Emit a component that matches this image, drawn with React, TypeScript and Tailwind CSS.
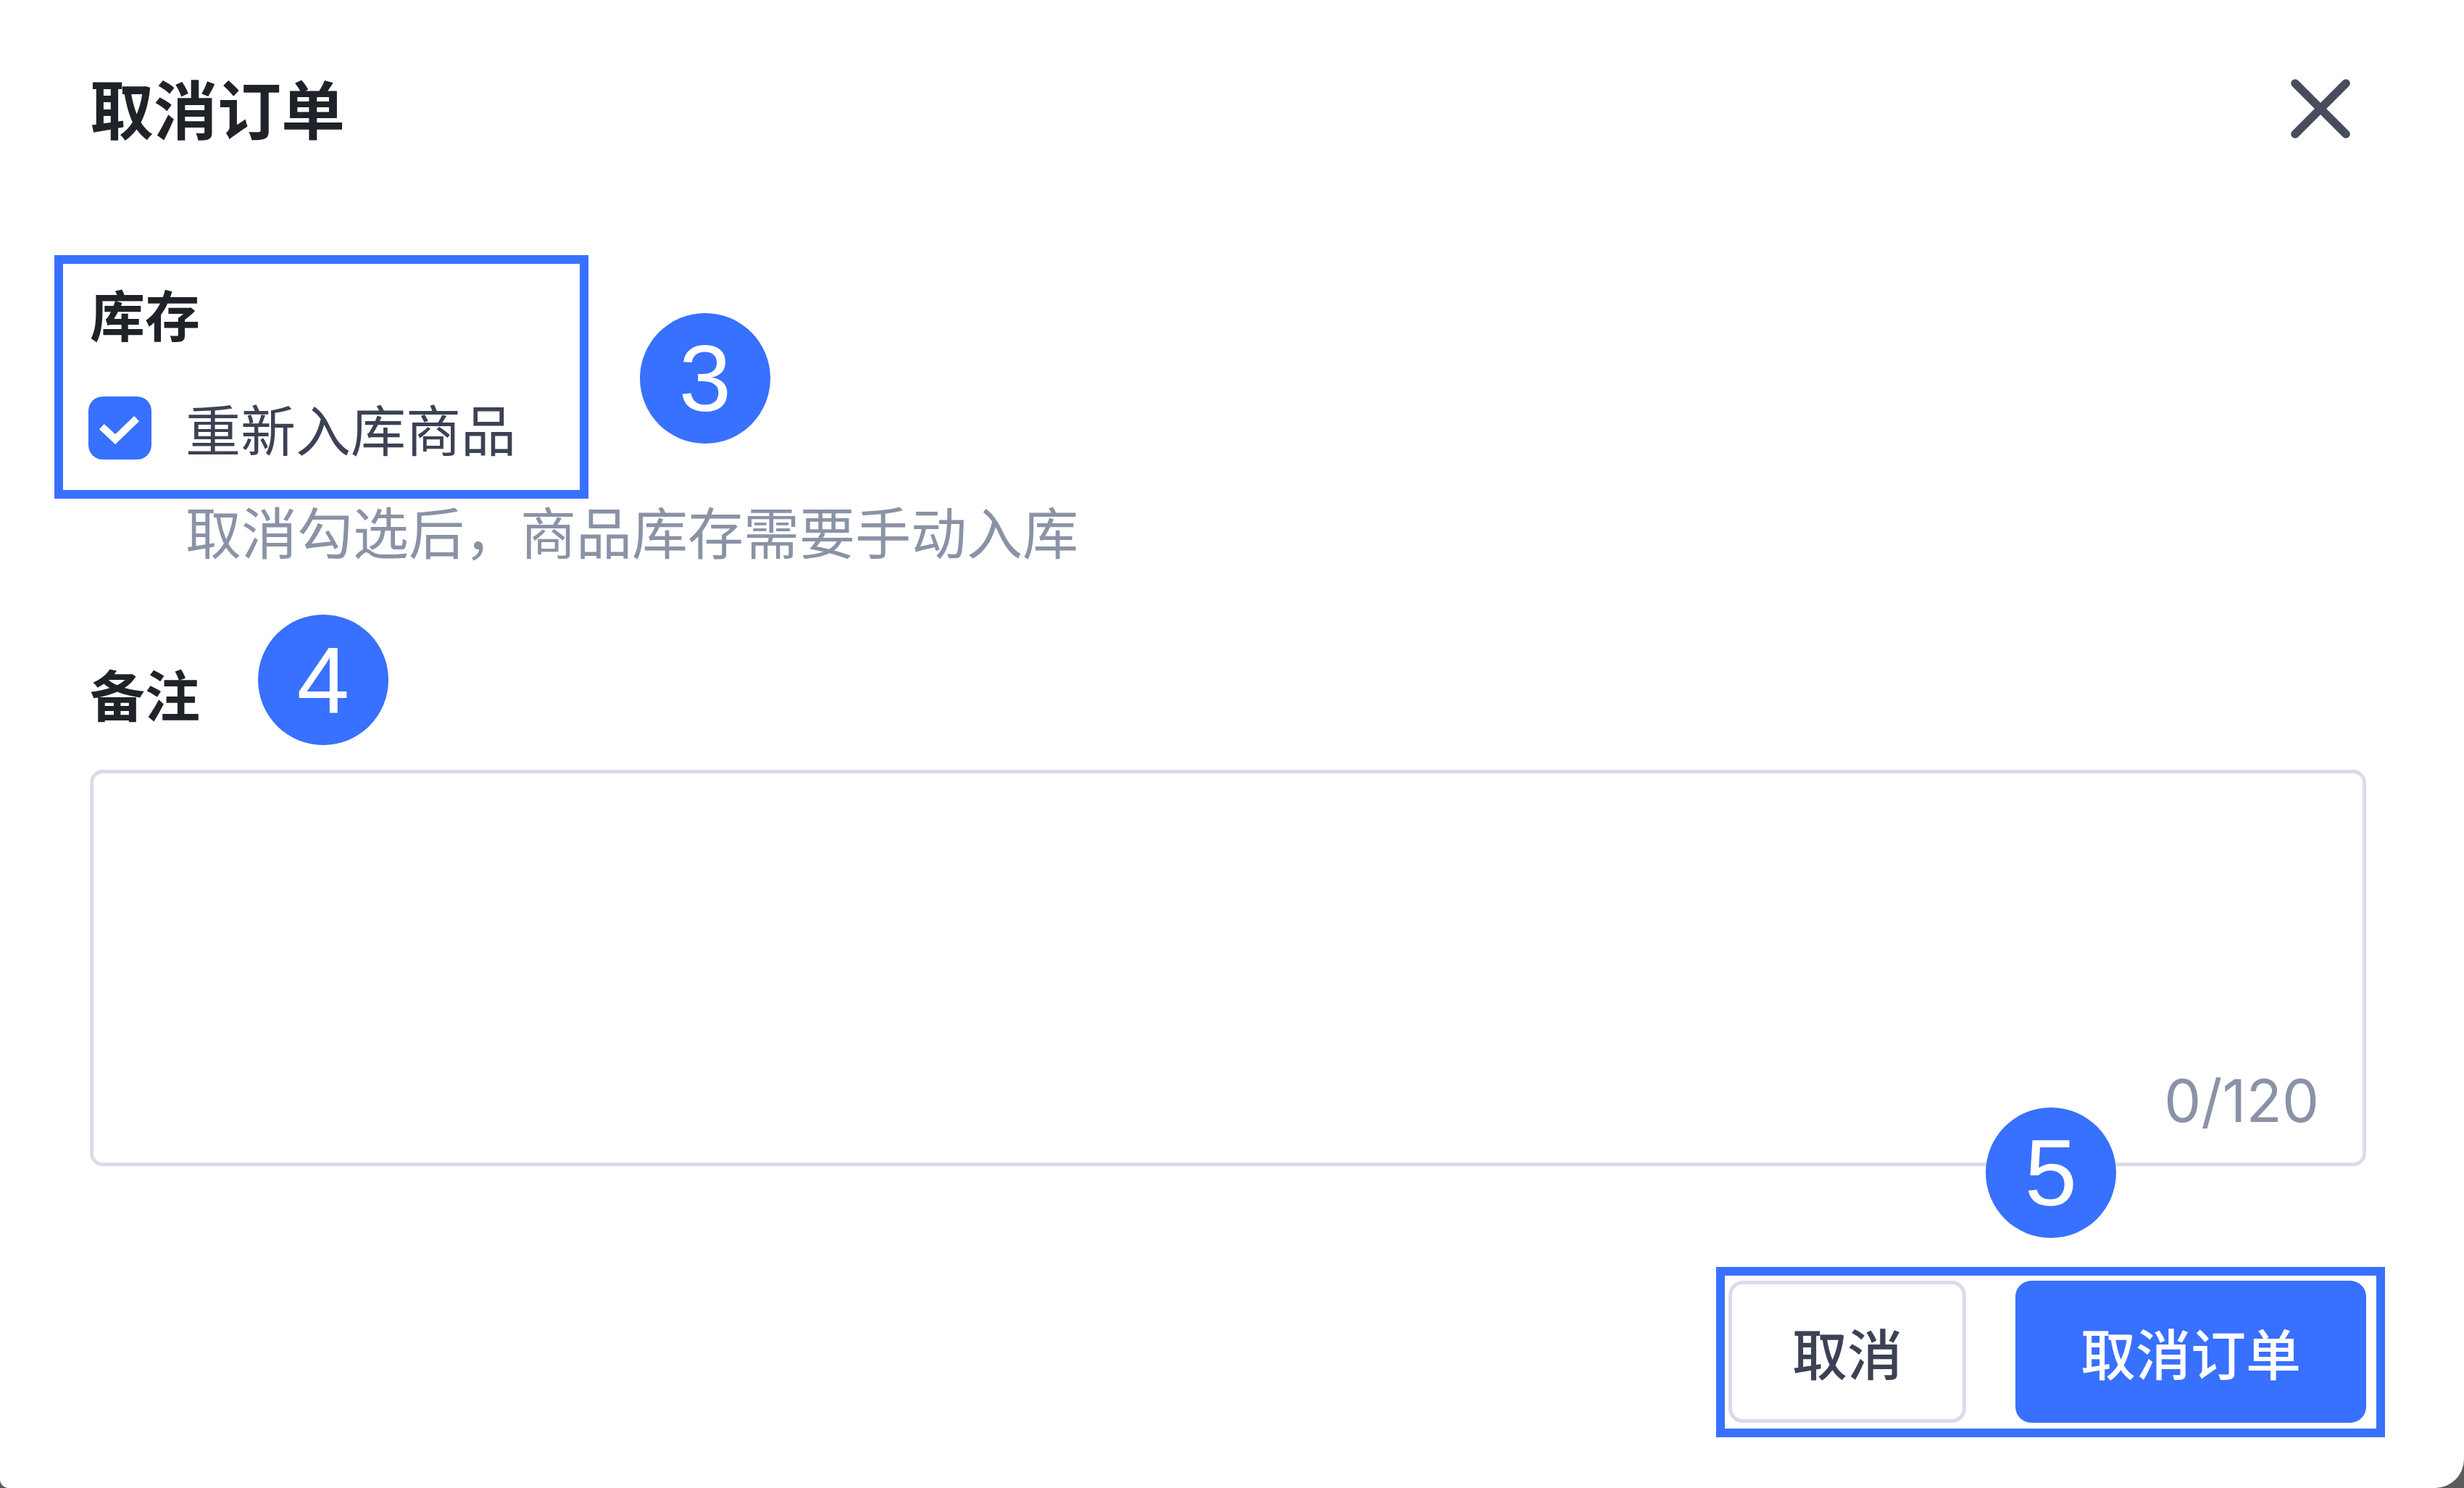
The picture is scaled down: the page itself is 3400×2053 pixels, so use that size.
import { X } from "lucide-react";

const cjk = "font-['Noto_Sans_CJK_SC','Noto_Sans',sans-serif]";

function Badge({ n, className }: { n: string; className: string }) {
  return (
    <div
      className={`absolute flex h-[180px] w-[180px] items-center justify-center rounded-full bg-[#3870ff] font-['Liberation_Sans',Arial,sans-serif] text-[130px] leading-none text-white ${className}`}
    >
      {n}
    </div>
  );
}

export default function App() {
  return (
    <div className="h-[2053px] w-[3400px] overflow-hidden bg-[#5c5c5c]">
      <div
        className={`relative h-full w-full rounded-br-[40px] rounded-bl-[12px] bg-white ${cjk}`}
      >
        {/* header */}
        <div className="flex h-[294px] items-center justify-between pl-[124px] pr-[128px]">
          <h1 className="text-[88px] font-bold leading-none text-[#1f2329]">
            取消订单
          </h1>
          <button type="button" className="mt-[6px] text-[#474d5c]" aria-label="close">
            <X size={140} strokeWidth={2} />
          </button>
        </div>

        <div className="pl-[124px] pr-[135px]">
          {/* stock section */}
          <div className="mt-[88px] h-[100px] text-[76px] font-bold leading-[100px] text-[#1f2329]">
            库存
          </div>
          <label className="mt-[58px] flex h-[100px] items-center gap-[47px]">
            <span className="-ml-[2px] flex h-[87px] w-[87px] items-center justify-center rounded-[20px] bg-[#3870ff]">
              <svg width="87" height="87" viewBox="0 0 87 87" fill="none">
                <path
                  d="M22 45 L37 59 L63 34"
                  stroke="white"
                  strokeWidth="10"
                  strokeLinecap="square"
                  strokeLinejoin="miter"
                />
              </svg>
            </span>
            <span className="text-[76px] leading-[100px] text-[#3c4254]">
              重新入库商品
            </span>
          </label>
          <p className="mt-[42px] pl-[132px] text-[77px] leading-[100px] text-[#8a93a6]">
            取消勾选后，商品库存需要手动入库
          </p>

          {/* remark */}
          <div className="mt-[124px] h-[100px] text-[76px] font-bold leading-[100px] text-[#1f2329]">
            备注
          </div>
          <div className="relative mt-[56px] h-[547px] rounded-[18px] border-[5px] border-[#d8dce8]">
            <span className="absolute bottom-[40px] right-[60px] font-['Inter',sans-serif] text-[81px] leading-[90px] text-[#8a93a6]">
              0/120
            </span>
          </div>

          {/* footer */}
          <div className="mt-[158px] flex justify-end gap-[68px]">
            <button
              type="button"
              className="h-[196px] w-[328px] rounded-[20px] border-[5px] border-[#d8dce8] bg-white text-[76px] font-medium text-[#3c4254]"
            >
              取消
            </button>
            <button
              type="button"
              className="h-[196px] w-[484px] rounded-[22px] bg-[#3870ff] text-[76px] font-medium text-white"
            >
              取消订单
            </button>
          </div>
        </div>

        {/* annotations */}
        <div className="absolute left-[75px] top-[352px] h-[336px] w-[737px] border-[12px] border-[#3870ff]" />
        <div className="absolute left-[2368px] top-[1748px] h-[235px] w-[923px] border-[12px] border-[#3870ff]" />
        <Badge n="3" className="left-[883px] top-[432px]" />
        <Badge n="4" className="left-[356px] top-[848px]" />
        <Badge n="5" className="left-[2740px] top-[1528px]" />
      </div>
    </div>
  );
}
